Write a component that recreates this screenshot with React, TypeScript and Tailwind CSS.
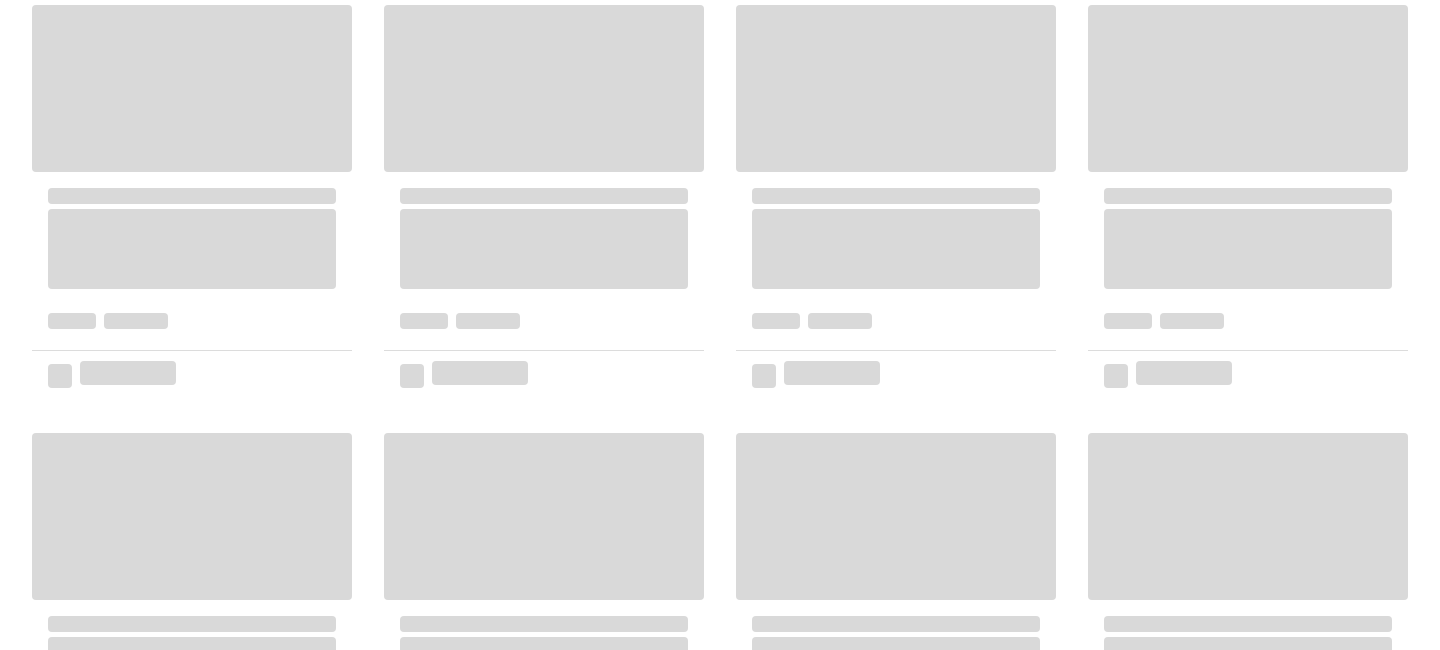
import React from "react";

function Card() {
  return (
    <div className="flex flex-col">
      <div className="h-[167px] w-full rounded-[4px] bg-[#d9d9d9]" />
      <div className="px-4 pt-4">
        <div className="h-4 w-full rounded-[4px] bg-[#d9d9d9]" />
        <div className="mt-[5px] h-20 w-full rounded-[4px] bg-[#d9d9d9]" />
        <div className="mt-6 flex gap-2">
          <div className="h-4 w-12 rounded-[4px] bg-[#d9d9d9]" />
          <div className="h-4 w-16 rounded-[4px] bg-[#d9d9d9]" />
        </div>
      </div>
      <div className="mt-[21px] h-px w-full bg-[#dcdcdc]" />
      <div className="flex items-start gap-2 px-4 pt-[10px] pb-[13px]">
        <div className="mt-[3px] h-6 w-6 rounded-[4px] bg-[#d9d9d9]" />
        <div className="h-6 w-24 rounded-[4px] bg-[#d9d9d9]" />
      </div>
    </div>
  );
}

export default function App() {
  return (
    <div
      className="min-h-[650px] bg-white px-8 pt-[5px]"
      style={{ fontFamily: '"Liberation Sans", Arial, sans-serif' }}
    >
      <div className="grid grid-cols-4 gap-x-8 gap-y-8">
        {Array.from({ length: 8 }).map((_, i) => (
          <Card key={i} />
        ))}
      </div>
    </div>
  );
}
